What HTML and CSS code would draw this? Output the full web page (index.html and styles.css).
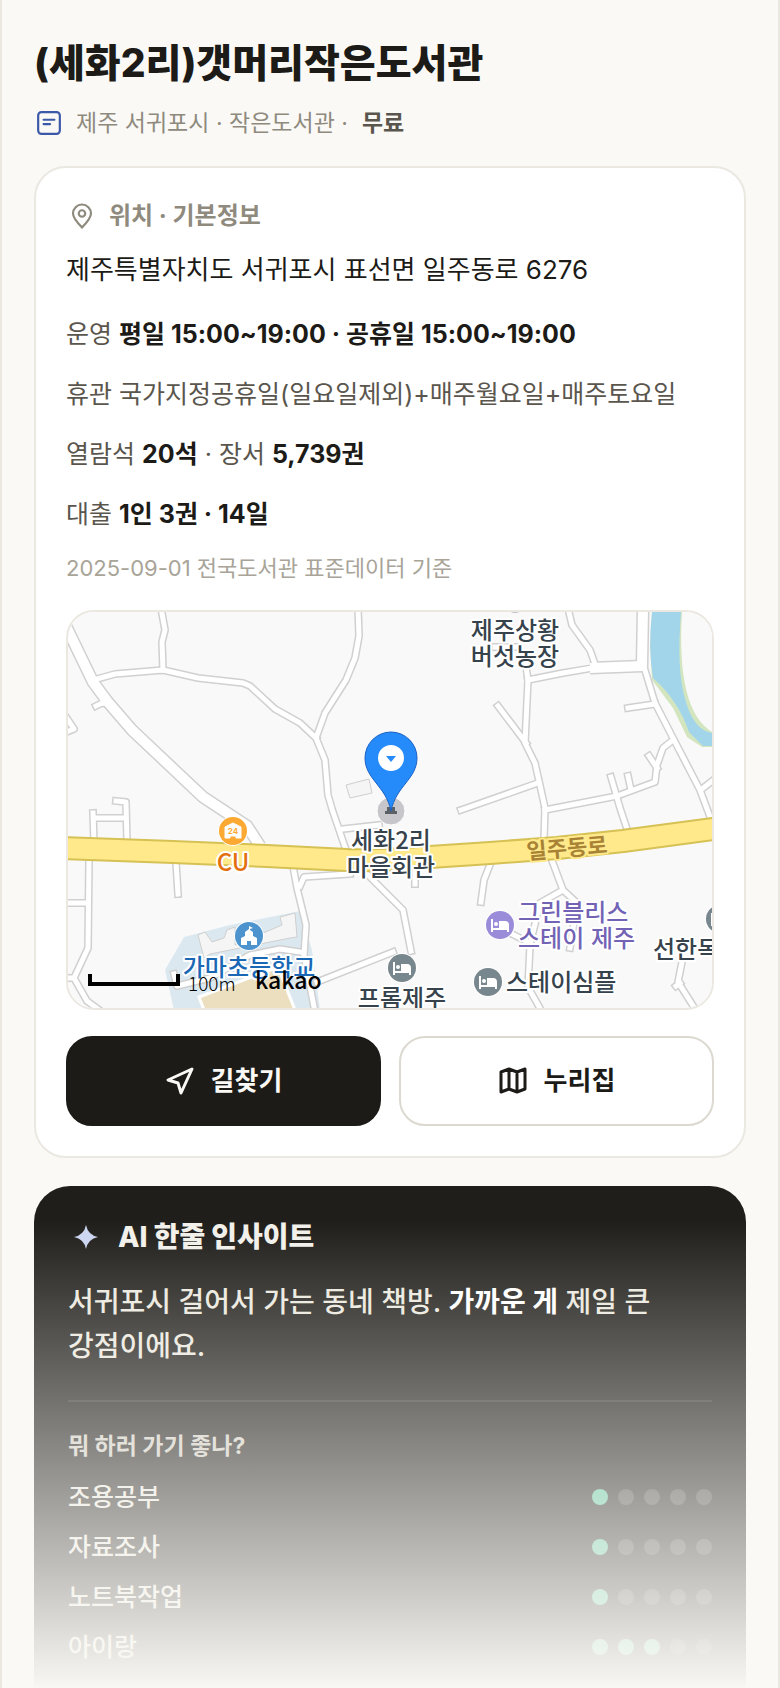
FILE: index.html
```html
<!DOCTYPE html>
<html lang="ko">
<head>
<meta charset="utf-8">
<meta name="viewport" content="width=device-width, initial-scale=1">
<title>(세화2리)갯머리작은도서관</title>
<link rel="stylesheet" href="styles.css">
</head>
<body>
<main class="page">
  <header class="head">
    <h1 class="title">(세화2리)갯머리작은도서관</h1>
    <p class="meta">
      <svg class="meta-icon" viewBox="0 0 24 24" aria-hidden="true"><rect x="2" y="2" width="20" height="20" rx="3"/><path d="M7 9h10M7 13h6"/></svg>
      <span>제주 서귀포시 · 작은도서관 ·</span>
      <strong>무료</strong>
    </p>
  </header>

  <section class="card">
    <h2 class="card-head">
      <svg class="card-icon" viewBox="0 0 24 24" aria-hidden="true"><path d="M12 22.500C7.500 18 3.700 14 3.700 9.700a8.300 8.300 0 0 1 16.600 0c0 4.300-3.800 8.300-8.300 12.800z"/><circle cx="12" cy="9.700" r="3"/></svg>
      <span>위치 · 기본정보</span>
    </h2>
    <p class="address">제주특별자치도 서귀포시 표선면 일주동로 6276</p>
    <p class="info">운영 <strong>평일 15:00~19:00 · 공휴일 15:00~19:00</strong></p>
    <p class="info">휴관 국가지정공휴일(일요일제외)+매주월요일+매주토요일</p>
    <p class="info">열람석 <strong>20석</strong> · 장서 <strong>5,739권</strong></p>
    <p class="info">대출 <strong>1인 3권 · 14일</strong></p>
    <p class="note">2025-09-01 전국도서관 표준데이터 기준</p>

    <div class="map">
      <svg class="map-canvas" viewBox="8 12 644 396" preserveAspectRatio="xMidYMid slice" role="img" aria-label="도서관 주변 지도">
        <defs>
          <g id="roads">
            <path d="M37 79 55 74 103 70 138 78 183 83 190 86 215 109 240 123 256 138"/>
            <path d="M101 8 105 30 102 42 103 70"/>
            <path d="M298 8 299 36 295 58 286 80 265 113 256 138 265 160 268 195 272 209 286 250"/>
            <path d="M36 106 42 103 48 104"/>
            <path d="M4 114 14 129 4 133"/>
            <path d="M56 201 66 202 67 242M34 218H66M33 213 34 242"/>
            <path d="M29 260 28 348 14 378 27 401 42 412M4 303H28M4 378H14"/>
            <path d="M116 262 118 294"/>
            <path d="M233 266 237 288 246 325 244 355 255 412M240 286 244 277 290 274"/>
            <path d="M305 272 332 299 343 310 351 351"/>
            <path d="M257 382 333 352"/>
            <path d="M283 229 319 225"/>
            <path d="M508 8 512 25 530 50 535 64"/>
            <path d="M584 67 595 103 613 138 640 190 652 222"/>
            <path d="M568 108 595 104M642 189 656 178"/>
            <path d="M613 140 603 148 597 165 595 182 557 196 485 210"/>
            <path d="M589 156 597 168M551 177 560 208 568 232M568 176 571 190"/>
            <path d="M465 60 468 80 465 143 475 163 485 208 484 240"/>
            <path d="M438 106 466 143M478 183 401 210M435 47H455"/>
            <path d="M468 80 503 73 533 68"/>
            <path d="M491 258 503 290 517 303 510 348M503 290 480 303 470 345 468 387 477 403 482 412M450 333 468 342"/>
            <path d="M431 262 424 280 421 302M355 270V284"/>
            <path d="M622 362 618 382 637 412M616 386 620 383"/>
          </g>
          <g id="trunk"><path d="M4 22 33 82 47 101 72 130 143 197 187 226 200 246"/><path d="M583 8 582 66 530 68"/></g>
          <g id="bed"><circle r="15" fill="#fff"/><circle r="14" fill="currentColor"/><path d="M-8-6V7M-8 4H8V7M8 4V0q0-3-3-3H0V4" fill="none" stroke="#fff" stroke-width="2"/><rect y="-3" width="8" height="6" fill="#fff"/><circle cx="-4" cy="-1" r="2" fill="#fff"/></g>
        </defs>
        <rect x="0" y="0" width="660" height="420" fill="#f9f9f9"/>
        <path d="M592 12H622Q616 110 652 132V147H642L627 137 613 108 592 80 590 45Z" fill="#d3e5bf"/>
        <path d="M592 12H621C618 50 619 80 626 102Q634 130 652 133V146H643L629 132Q618 100 593 78 588 48 592 12Z" fill="#a2d5ea"/>
        <path d="M124 337 170 325 240 311 252 350 260 410H114L105 370Z" fill="#dce8f0"/>
        <use href="#roads" class="road-edge"/>
        <use href="#trunk" class="trunk-edge"/>
        <path d="M114 374 117 386 150 378 190 355 220 349 240 352" class="road-edge"/>
        <path d="M114 374 117 386 150 378 190 355 220 349 240 352" class="road-fill"/>
        <use href="#roads" class="road-fill"/>
        <use href="#trunk" class="trunk-fill"/>
        <path d="M139 397 218 367 235 410H144Z" fill="#ebdfc0" stroke="#fff" stroke-width="3"/>
        <path d="M138 335 145 332 152 342 164 338 167 330 175 327V345L222 325 220 317 235 313 237 337 230 338 150 354 144 358ZM286 185 309 179 312 193 290 198Z" fill="#f5f5f5" stroke="#cfcfcf"/>
        <path d="M0 248 113 252 207 256 287 260Q330 261 370 257L430 253 497 248 563 241 660 228" class="main-edge"/>
        <path d="M0 248 113 252 207 256 287 260Q330 261 370 257L430 253 497 248 563 241 660 228" class="main-fill"/>

        <circle cx="455" cy="3" r="10" fill="#bfc2c7"/>
        <g transform="translate(173 231)"><circle r="15" fill="#fff"/><circle r="14" fill="#fba932"/><path d="M-8-4 0-8 8-4V7H3V5H-3V7H-8Z" fill="#fff" stroke="#fff" stroke-linejoin="round"/><text y="3" class="tiny">24</text></g>
        <g transform="translate(189 336)"><circle r="15" fill="#fff"/><circle r="14" fill="#4d93ce"/><path d="M-8 9V2L-4 0V-4L0-7V-10L4-8 1-7V-6L4-4V0L8 2V9H2V5H-2V9Z" fill="#fff"/></g>
        <use href="#bed" x="440" y="325" color="#9a8cd8"/>
        <use href="#bed" x="342" y="368" color="#78878d"/>
        <use href="#bed" x="428" y="382" color="#78878d"/>
        <use href="#bed" x="660" y="319" color="#78878d"/>
        <g class="place">
          <text x="455" y="39" text-anchor="middle">제주상황</text>
          <text x="455" y="65" text-anchor="middle">버섯농장</text>
          <text x="331" y="249" text-anchor="middle">세화2리</text>
          <text x="331" y="276" text-anchor="middle">마을회관</text>
          <text x="342" y="407" text-anchor="middle">프롬제주</text>
          <text x="446" y="391">스테이심플</text>
          <text x="593" y="358">선한목</text>
          <text x="173" y="271" text-anchor="middle" fill="#e3700f">CU</text>
          <text x="189" y="376" text-anchor="middle" fill="#1a68b5">가마초등학교</text>
          <text x="458" y="321" fill="#7263b5">그린블리스</text>
          <text x="458" y="347" fill="#7263b5">스테이 제주</text>
        </g>
        <text x="507" y="256" text-anchor="middle" transform="rotate(-5 507 248)" class="road-name">일주동로</text>

        <circle cx="331" cy="211" r="14" fill="#c6c6cb" stroke="#fff"/>
        <path d="M327 207H335V211H337V214H325V211H327Z" fill="#5b6066"/>
        <path d="M331 211C326 186 305 179 305 158a26 26 0 0 1 52 0C357 179 336 186 331 211Z" fill="#258bfb" stroke="#1a62c4"/>
        <circle cx="331" cy="158" r="13" fill="#fff"/>
        <path d="M326 156H336L331 162Z" fill="#258bfb"/>
        <path d="M30 374V384H118V374" fill="none" stroke="#000" stroke-width="4"/>
        <text x="128" y="391" class="scale">100m</text>
        <text x="195" y="389" class="brand">kakao</text>
      </svg>
    </div>

    <div class="actions">
      <button class="btn btn-dark" type="button">
        <svg class="btn-icon" viewBox="-1 -1 30 30" aria-hidden="true"><path d="M26 2 2 13 12 16 15 26Z"/></svg>
        <span class="btn-label">길찾기</span>
      </button>
      <a class="btn btn-line" href="#">
        <svg class="btn-icon" viewBox="-1 -1 30 30" aria-hidden="true"><path d="M2 5 10 2 18 5 26 2V22L18 25 10 22 2 25ZM10 2V22M18 5V25"/></svg>
        <span class="btn-label">누리집</span>
      </a>
    </div>
  </section>

  <section class="insight">
    <h2 class="insight-head">
      <svg class="spark" viewBox="0 0 24 24" aria-hidden="true"><path d="M12 0Q14 10 24 12 14 14 12 24 10 14 0 12 10 10 12 0Z"/></svg>
      <span>AI 한줄 인사이트</span>
    </h2>
    <p class="insight-text">서귀포시 걸어서 가는 동네 책방. <strong>가까운 게</strong> 제일 큰 강점이에요.</p>
    <h3 class="sub">뭐 하러 가기 좋나?</h3>
    <ul class="scores">
      <li class="score"><span>조용공부</span><span class="dots"><i class="dot on"></i><i class="dot"></i><i class="dot"></i><i class="dot"></i><i class="dot"></i></span></li>
      <li class="score"><span>자료조사</span><span class="dots"><i class="dot on"></i><i class="dot"></i><i class="dot"></i><i class="dot"></i><i class="dot"></i></span></li>
      <li class="score"><span>노트북작업</span><span class="dots"><i class="dot on"></i><i class="dot"></i><i class="dot"></i><i class="dot"></i><i class="dot"></i></span></li>
      <li class="score"><span>아이랑</span><span class="dots"><i class="dot on"></i><i class="dot on"></i><i class="dot on"></i><i class="dot"></i><i class="dot"></i></span></li>
    </ul>
  </section>
  <div class="fade"></div>
</main>
</body>
</html>
```
FILE: styles.css
```css
* { box-sizing: border-box; margin: 0; padding: 0; }
body {
  background: #faf9f5;
  color: #1c1b17;
  font-family: Inter, "Noto Sans CJK KR", sans-serif;
  word-break: keep-all;
}
.page {
  position: relative;
  display: flex;
  flex-direction: column;
  min-height: 100vh;
  padding: 32px 32px 0;
  border: solid #eae8e1;
  border-width: 0 2px;
}
.head { padding-bottom: 24px; }
.title { font-size: 39px; line-height: 62px; font-weight: 800; }
.meta {
  display: flex;
  align-items: center;
  gap: 14px;
  margin-top: 10px;
  padding-left: 2px;
  font-size: 23px;
  line-height: 38px;
  color: #8f8a7e;
}
.meta strong { font-weight: 600; color: #5a564d; }
.meta-icon { width: 26px; height: 26px; fill: none; stroke: #3c59a8; stroke-width: 2; stroke-linecap: round; }

.card {
  padding: 30px;
  border: 2px solid #eae8e1;
  border-radius: 32px;
  background: #fff;
}
.card-head {
  display: flex;
  align-items: center;
  gap: 14px;
  padding-left: 3px;
  font-size: 24px;
  line-height: 36px;
  font-weight: 700;
  color: #8f8a7e;
}
.card-icon { width: 26px; height: 26px; fill: none; stroke: #8f8a7e; stroke-width: 2; }
.address { margin-top: 16px; font-size: 26px; line-height: 40px; }
.info { margin-top: 20px; font-size: 25px; line-height: 40px; color: #5a564d; }
.address + .info { margin-top: 24px; }
.info strong { font-weight: 700; color: #1c1b17; }
.note { margin-top: 16px; font-size: 22px; line-height: 36px; color: #a8a498; }

.map {
  display: flex;
  margin-top: 24px;
  height: 400px;
  border: 2px solid #eae8e1;
  border-radius: 28px;
  overflow: hidden;
}
.map-canvas { flex: 1; width: 100%; height: 100%; }
.road-edge, .road-fill, .trunk-edge, .trunk-fill, .main-edge, .main-fill { fill: none; stroke-linejoin: round; }
.road-edge { stroke: #d0d0d0; stroke-width: 8; stroke-linecap: square; }
.road-fill { stroke: #fff; stroke-width: 5; stroke-linecap: square; }
.trunk-edge { stroke: #d0d0d0; stroke-width: 13; }
.trunk-fill { stroke: #fff; stroke-width: 10; }
.main-edge { stroke: #d6c154; stroke-width: 24; }
.main-fill { stroke: #ffe98a; stroke-width: 20; }
.place, .road-name { font-family: "Noto Sans CJK KR", sans-serif; font-weight: 500; paint-order: stroke; stroke-width: 4; stroke-linejoin: round; }
.place { font-size: 24px; fill: #37434c; stroke: #fff; }
.road-name { font-size: 22px; font-weight: 700; fill: #a98335; stroke: #ffe98a; }
.tiny { font: 700 8px Inter, sans-serif; fill: #fba932; text-anchor: middle; }
.scale { font: 300 19px "Noto Sans CJK KR", sans-serif; }
.brand { font: 500 23px "Noto Sans CJK KR", sans-serif; }

.actions { display: grid; grid-template-columns: 1fr 1fr; gap: 18px; margin-top: 26px; }
.btn {
  display: flex;
  align-items: center;
  justify-content: center;
  gap: 16px;
  height: 90px;
  border: 2px solid #dcd9d0;
  border-radius: 26px;
  background: #fff;
  color: #1c1b17;
  font-family: inherit;
  font-size: 26px;
  font-weight: 700;
  text-decoration: none;
}
.btn-dark { border-color: #1c1b17; background: #1c1b17; color: #faf9f5; }
.btn-label { padding-bottom: 6px; }
.btn-icon { width: 30px; height: 30px; fill: none; stroke: currentColor; stroke-width: 3; stroke-linejoin: round; }

.insight {
  flex: 1;
  margin-top: 28px;
  padding: 30px 34px 20px;
  border-radius: 36px 36px 0 0;
  background: #1f1e1a;
  color: #f2f0ea;
}
.insight-head { display: flex; align-items: center; gap: 20px; padding-left: 6px; font-size: 28px; line-height: 42px; font-weight: 800; }
.spark { width: 24px; height: 24px; fill: #cbd5f0; }
.insight-text { margin-top: 22px; padding-bottom: 32px; border-bottom: 2px solid #33322e; font-size: 28px; line-height: 44px; font-weight: 500; color: #ebe8df; }
.insight-text strong { font-weight: 700; color: #fff; }
.sub { margin-top: 26px; font-size: 23px; line-height: 36px; font-weight: 700; color: #cfccc2; }
.scores { margin-top: 8px; list-style: none; }
.score { display: flex; align-items: center; justify-content: space-between; font-size: 25px; line-height: 50px; font-weight: 500; color: #ebe8df; }
.dots { display: flex; gap: 10px; }
.dot { width: 16px; height: 16px; border-radius: 50%; background: #454440; }
.dot.on { background: #5cc49a; }
.fade {
  position: absolute;
  left: 0;
  right: 0;
  bottom: 0;
  height: 472px;
  background: linear-gradient(rgba(250, 249, 245, 0), #faf9f5);
  pointer-events: none;
}
```
